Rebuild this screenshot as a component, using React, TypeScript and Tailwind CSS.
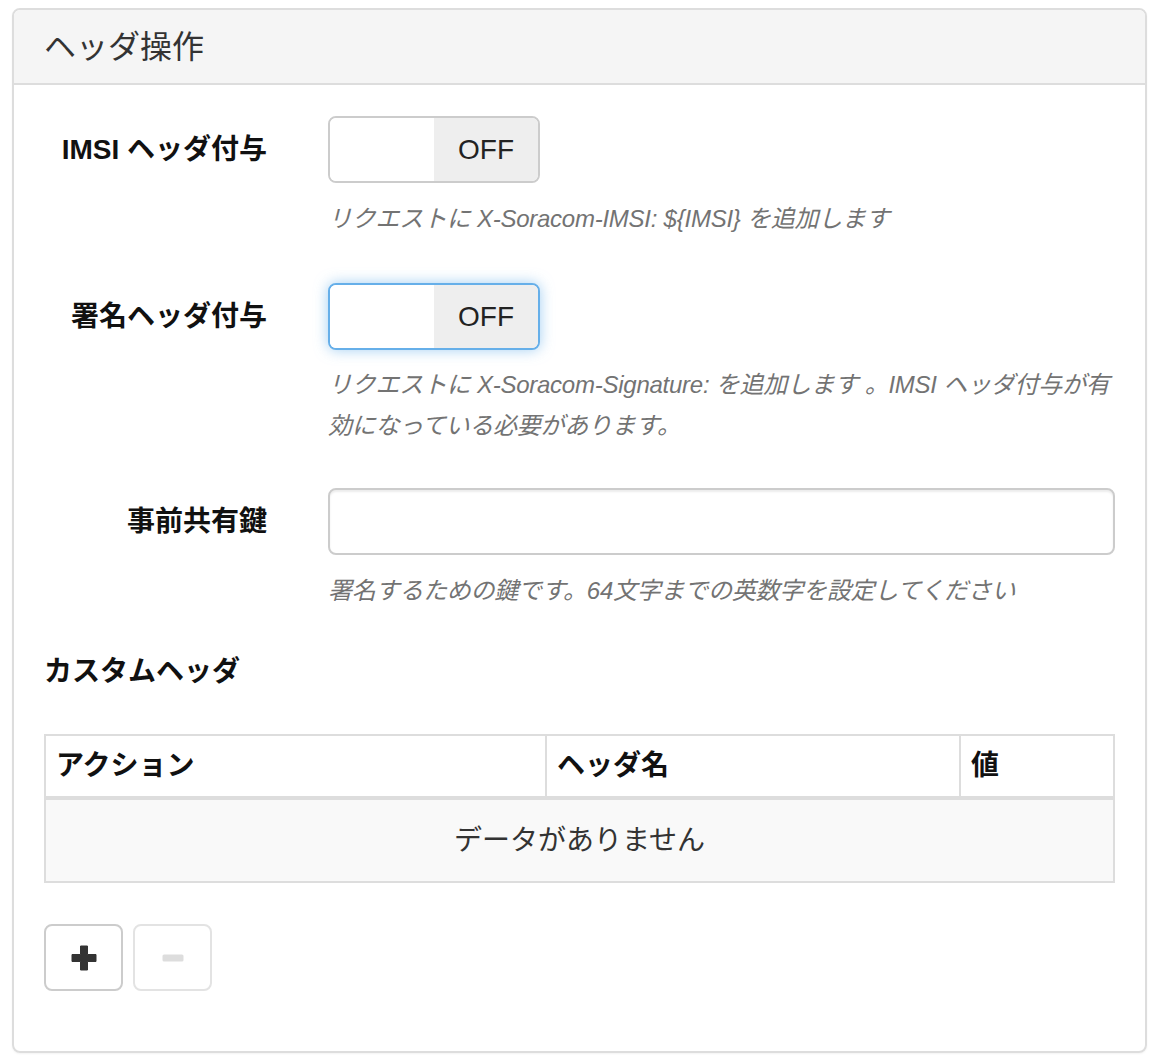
import { useState } from 'react'

const HelpText = ({ children, className = '' }: { children: React.ReactNode; className?: string }) => (
    <p className={`text-[24px] leading-[41px] italic tracking-[-0.25px] text-[#737373] ${className}`}>{children}</p>
)

const Toggle = ({ focused = false }: { focused?: boolean }) => (
    <button
        type="button"
        className={`flex h-[67px] w-[212px] overflow-hidden rounded-[8px] border-2 bg-white ${
            focused
                ? 'border-[#66afe9] shadow-[0_0_14px_rgba(102,175,233,0.6)]'
                : 'border-[#ccc]'
        }`}
    >
        <span className="h-full w-[104px] bg-white" />
        <span className="flex h-full flex-1 items-center justify-center bg-[#eee] text-[28px] text-[#222]">
            OFF
        </span>
    </button>
)

const FormRow = ({ label, children }: { label: string; children: React.ReactNode }) => (
    <div className="flex gap-x-[61px]">
        <div className="flex h-[67px] w-[223px] shrink-0 items-center justify-end">
            <label className="text-[28px] font-bold text-[#111]">{label}</label>
        </div>
        <div className="flex-1">{children}</div>
    </div>
)

const App = () => {
    const [psk, setPsk] = useState('')

    return (
        <div className="min-h-screen bg-white pl-[12px] pt-[8px] font-['Liberation_Sans','Noto_Sans_CJK_JP',sans-serif]">
            <div className="w-[1135px] overflow-hidden rounded-[8px] border-2 border-[#ddd] shadow-[0_1px_2px_rgba(0,0,0,0.05)]">
                <div className="flex h-[75px] items-center border-b-2 border-[#ddd] bg-[#f5f5f5] px-[30px]">
                    <h3 className="text-[32px] text-[#333]">ヘッダ操作</h3>
                </div>

                <div className="px-[30px] pb-[60px] pt-[31px]">
                    <FormRow label="IMSI ヘッダ付与">
                        <Toggle />
                        <HelpText className="mt-[15px]">
                            リクエストに X-Soracom-IMSI: ${'{'}IMSI{'}'} を追加します
                        </HelpText>
                    </FormRow>

                    <div className="mt-[44px]">
                        <FormRow label="署名ヘッダ付与">
                            <Toggle focused />
                            <HelpText className="mt-[14px]">
                                リクエストに X-Soracom-Signature: を追加します 。IMSI ヘッダ付与が有効になっている必要があります。
                            </HelpText>
                        </FormRow>
                    </div>

                    <div className="mt-[42px]">
                        <FormRow label="事前共有鍵">
                            <input
                                type="text"
                                value={psk}
                                onChange={(e) => setPsk(e.target.value)}
                                className="h-[67px] w-full rounded-[8px] border-2 border-[#ccc] bg-white px-[24px] text-[28px] text-[#555] shadow-[inset_0_2px_2px_rgba(0,0,0,0.075)] outline-none"
                            />
                            <HelpText className="mt-[15px]">
                                署名するための鍵です。64文字までの英数字を設定してください
                            </HelpText>
                        </FormRow>
                    </div>

                    <h4 className="mt-[41px] text-[28px] font-bold leading-[40px] text-[#111]">カスタムヘッダ</h4>

                    <table className="mt-[42px] w-full table-fixed border-separate border-spacing-0 text-[28px]">
                        <thead>
                            <tr>
                                <th className="h-[66px] w-[503px] border-2 border-b-4 border-[#ddd] px-[10px] text-left font-bold text-[#111]">
                                    アクション
                                </th>
                                <th className="h-[66px] w-[414px] border-y-2 border-r-2 border-b-4 border-[#ddd] px-[10px] text-left font-bold text-[#111]">
                                    ヘッダ名
                                </th>
                                <th className="h-[66px] border-y-2 border-r-2 border-b-4 border-[#ddd] px-[10px] text-left font-bold text-[#111]">
                                    値
                                </th>
                            </tr>
                        </thead>
                        <tbody>
                            <tr>
                                <td
                                    colSpan={3}
                                    className="h-[83px] border-x-2 border-b-2 border-[#ddd] bg-[#f9f9f9] text-center text-[#333]"
                                >
                                    データがありません
                                </td>
                            </tr>
                        </tbody>
                    </table>

                    <div className="mt-[41px] flex gap-[10px]">
                        <button
                            type="button"
                            className="flex h-[67px] w-[79px] items-center justify-center rounded-[8px] border-2 border-[#ccc] bg-white"
                        >
                            <svg width="26" height="26" viewBox="0 0 26 26">
                                <path
                                    d="M9.5 1h7v8.5h8.5v7h-8.5v8.5h-7v-8.5H1v-7h8.5z"
                                    fill="#333"
                                    stroke="#333"
                                    strokeWidth="1"
                                    strokeLinejoin="round"
                                />
                            </svg>
                        </button>
                        <button
                            type="button"
                            disabled
                            className="flex h-[67px] w-[79px] items-center justify-center rounded-[8px] border-2 border-[#e3e3e3] bg-white"
                        >
                            <svg width="22" height="8" viewBox="0 0 22 8">
                                <rect x="0.5" y="0.5" width="21" height="7" rx="1.5" fill="#ddd" />
                            </svg>
                        </button>
                    </div>
                </div>
            </div>
        </div>
    )
}

export default App
